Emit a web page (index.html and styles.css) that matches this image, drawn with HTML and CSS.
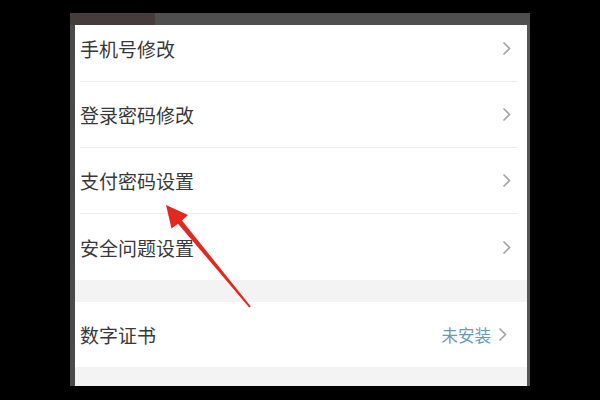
FILE: index.html
```html
<!DOCTYPE html>
<html lang="zh-CN">
<head>
<meta charset="utf-8">
<link rel="stylesheet" href="styles.css">
</head>
<body>
<div class="frame">
  <div class="topbar"><div class="topbar-left"></div><div class="topbar-rest"></div></div>
  <div class="body">
    <div class="side-left"></div>
    <div class="screen">
      <div class="list">
        <div class="row"><span class="label">手机号修改</span><svg class="chev" width="9" height="15" viewBox="0 0 9 15"><polyline points="1.5,1.5 7.5,7.5 1.5,13.5"/></svg></div>
        <div class="row"><span class="label">登录密码修改</span><svg class="chev" width="9" height="15" viewBox="0 0 9 15"><polyline points="1.5,1.5 7.5,7.5 1.5,13.5"/></svg></div>
        <div class="row"><span class="label">支付密码设置</span><svg class="chev" width="9" height="15" viewBox="0 0 9 15"><polyline points="1.5,1.5 7.5,7.5 1.5,13.5"/></svg></div>
        <div class="row last"><span class="label">安全问题设置</span><svg class="chev" width="9" height="15" viewBox="0 0 9 15"><polyline points="1.5,1.5 7.5,7.5 1.5,13.5"/></svg></div>
      </div>
      <div class="gap"></div>
      <div class="row single"><span class="label">数字证书</span><span class="right"><span class="status">未安装</span><svg class="chev" width="9" height="15" viewBox="0 0 9 15"><polyline points="1.5,1.5 7.5,7.5 1.5,13.5"/></svg></span></div>
      <div class="gap end"></div>
    </div>
    <div class="side-right"></div>
  </div>
</div>
<svg class="arrow" width="600" height="400" viewBox="0 0 600 400">
  <polygon points="166,205 188,215 182,220.5 250.8,306.5 249.2,307.5 178,223.7 171.5,228.5" fill="#e3281f"/>
</svg>
</body>
</html>
```
FILE: styles.css
```css
html, body {
  margin: 0;
  padding: 0;
  background: #000;
}
body {
  width: 600px;
  height: 400px;
  overflow: hidden;
  position: relative;
  padding-top: 13px;
  box-sizing: border-box;
  font-family: "Noto Sans CJK SC", "Noto Sans", sans-serif;
}
.frame {
  margin-left: 70px;
  width: 460px;
  height: 373px;
  overflow: hidden;
}
.topbar {
  display: flex;
  height: 12px;
}
.topbar-left {
  width: 85px;
  background: #473c3c;
}
.topbar-rest {
  flex: 1;
  background: #4f4f4f;
}
.body {
  display: flex;
  height: 361px;
  overflow: hidden;
}
.side-left {
  width: 5px;
  background: #4a4a4a;
}
.side-right {
  width: 3px;
  background: #555;
}
.screen {
  flex: 1;
  height: 361px;
  background: #fff;
  overflow: hidden;
}
.list {
  margin-top: -9px;
}
.row {
  height: 66px;
  margin-left: 5px;
  margin-right: 9px;
  padding-right: 7px;
  border-bottom: 1px solid #ececec;
  box-sizing: border-box;
  display: flex;
  align-items: center;
  justify-content: space-between;
}
.row.last {
  border-bottom: none;
}
.row.single {
  height: 65px;
  border-bottom: none;
}
.label {
  font-size: 19px;
  color: #383838;
}
.chev {
  display: block;
}
.chev polyline {
  fill: none;
  stroke: #a3a3a3;
  stroke-width: 1.6;
}
.right {
  display: flex;
  align-items: center;
  gap: 7px;
}
.right .chev {
  margin-right: 4px;
}
.status {
  font-size: 16.5px;
  color: #6d99b6;
}
.gap {
  height: 22px;
  background: #f3f3f3;
}
.gap.end {
  height: 30px;
}
.arrow {
  position: absolute;
  left: 0;
  top: 0;
}
```
